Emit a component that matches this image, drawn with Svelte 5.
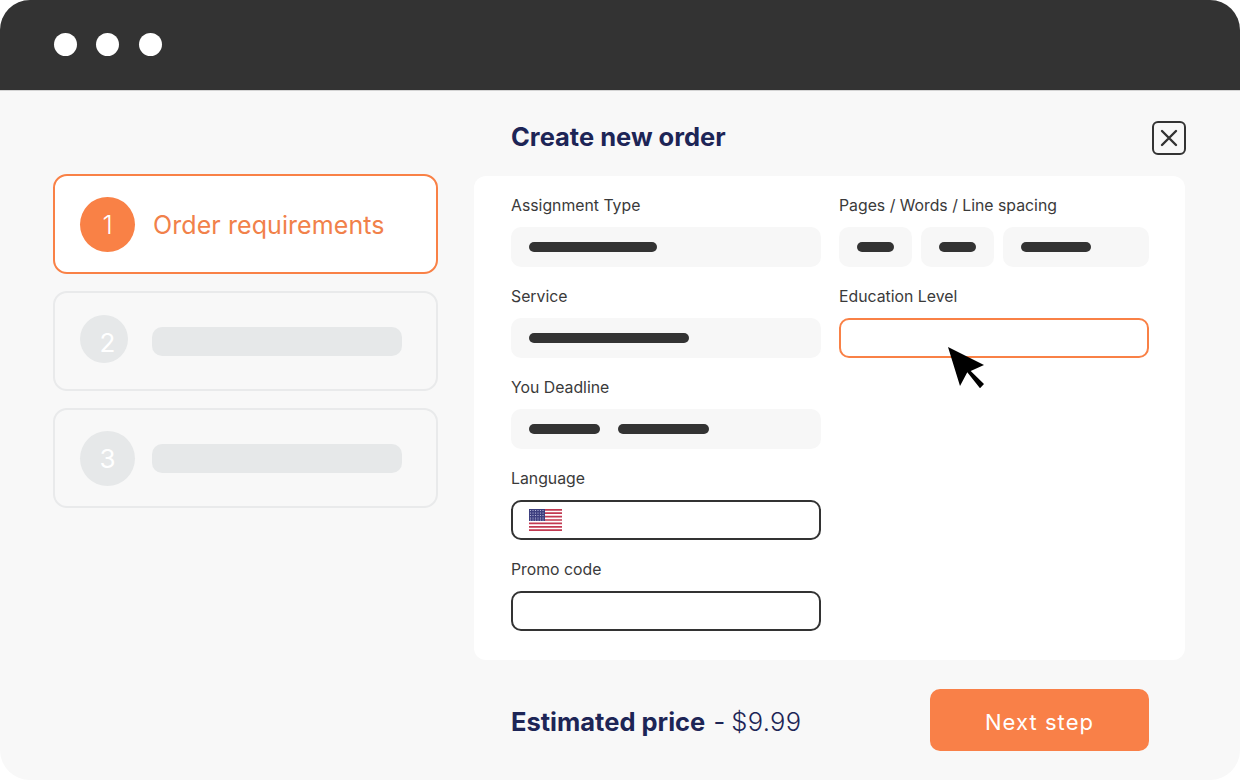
<script>
  const steps = [2, 3];
</script>

<div class="window">
  <header class="bar">
    <span class="dot"></span><span class="dot"></span><span class="dot"></span>
  </header>
  <div class="content">
    <aside class="side">
      <div class="step active">
        <span class="num">1</span>
        <span class="step-label">Order requirements</span>
      </div>
      {#each steps as s}
        <div class="step">
          <span class="num muted">{s}</span>
          <span class="skeleton"></span>
        </div>
      {/each}
    </aside>
    <main class="main">
      <div class="head">
        <h1>Create new order</h1>
        <button class="close" aria-label="Close">
          <svg width="20" height="20" viewBox="0 0 20 20"><path d="M3 3 17 17M17 3 3 17" stroke="#333" stroke-width="2.400" fill="none" stroke-linecap="round"/></svg>
        </button>
      </div>
      <section class="panel">
        <div class="col">
          <div class="group">
            <span class="label">Assignment Type</span>
            <div class="field filled"><i class="pill" style="width:128.5px"></i></div>
          </div>
          <div class="group">
            <span class="label">Service</span>
            <div class="field filled"><i class="pill" style="width:160px"></i></div>
          </div>
          <div class="group">
            <span class="label">You Deadline</span>
            <div class="field filled gap"><i class="pill" style="width:71.5px"></i><i class="pill" style="width:91px"></i></div>
          </div>
          <div class="group">
            <span class="label">Language</span>
            <div class="field outlined">
              <svg class="flag" width="33" height="22" viewBox="0 0 33 22">
                <rect width="33" height="22" fill="#fff"/>
                <path d="M0 .85h33M0 4.2h33M0 7.6h33M0 11h33M0 14.4h33M0 17.8h33M0 21.15h33" stroke="#c23a52" stroke-width="1.7"/>
                <rect width="16" height="12" fill="#3d3f7f"/>
                <g fill="#c9cbe6">
                  {#each [1.5, 4, 6.5, 9, 11] as y}
                    {#each [1.5, 4, 6.5, 9, 11.5, 14] as x}
                      <circle cx={x} cy={y} r=".6"/>
                    {/each}
                  {/each}
                </g>
              </svg>
            </div>
          </div>
          <div class="group">
            <span class="label">Promo code</span>
            <div class="field outlined"></div>
          </div>
        </div>
        <div class="col">
          <div class="group">
            <span class="label">Pages / Words / Line spacing</span>
            <div class="trio">
              <div class="field filled short"><i class="pill" style="width:37px"></i></div>
              <div class="field filled short"><i class="pill" style="width:37px"></i></div>
              <div class="field filled wide"><i class="pill" style="width:70px"></i></div>
            </div>
          </div>
          <div class="group">
            <span class="label">Education Level</span>
            <div class="field focus"></div>
          </div>
        </div>
        <svg class="cursor" width="39" height="44" viewBox="0 0 39 44">
          <path d="M1 1 37 19 23.700 25 37 38 33 42.300 20.300 26.300 13 40Z" fill="#000"/>
        </svg>
      </section>
      <footer class="foot">
        <div class="price"><strong>Estimated price</strong> <span class="dash">-</span> <span class="amount">$9.99</span></div>
        <button class="next">Next step</button>
      </footer>
    </main>
  </div>
</div>

<style>
  :global(body) {
    margin: 0;
    background: #fff;
  }
  .window {
    width: 1240px;
    height: 780px;
    border-radius: 30px;
    overflow: hidden;
    background: #f8f8f8;
    font-family: Inter, "Liberation Sans", sans-serif;
    display: flex;
    flex-direction: column;
  }
  .bar {
    flex: none;
    background: #333;
    border-bottom: 1px solid #d4d4d4;
    display: flex;
    align-items: center;
    gap: 19.250px;
    padding-left: 54px;
    padding-bottom: 2px;
    box-sizing: border-box;
    height: 91px;
  }
  .dot {
    width: 23px;
    height: 23px;
    border-radius: 50%;
    background: #fff;
  }
  .content {
    flex: 1;
    display: flex;
    padding-left: 53px;
  }
  .side {
    width: 385px;
    margin-top: 83px;
    display: flex;
    flex-direction: column;
    gap: 17px;
  }
  .step {
    box-sizing: border-box;
    height: 100px;
    border: 2px solid #e9eaeb;
    border-radius: 14px;
    display: flex;
    align-items: center;
    padding-left: 25px;
    gap: 24px;
  }
  .step.active {
    border: 2.500px solid #f98146;
    background: #fff;
    gap: 18px;
  }
  .num {
    width: 55px;
    height: 55px;
    border-radius: 50%;
    background: #f98146;
    color: #fff;
    display: flex;
    align-items: center;
    justify-content: center;
    font-size: 26px;
    font-weight: 300;
    flex: none;
    box-sizing: border-box;
  }
  .num.muted {
    width: 48px;
    height: 48px;
    margin-bottom: 5px;
    padding: 7px 0 0 7px;
    background: #e6e8e9;
    color: #fff;
    font-weight: 400;
  }
  .step:last-child .num.muted {
    width: 55px;
    height: 55px;
    margin: 0 -7px 0 0;
    padding: 0;
  }
  .step-label {
    font-size: 25px;
    color: #f1814a;
    letter-spacing: .08px;
    font-weight: 400;
    white-space: nowrap;
    padding-top: 2px;
  }
  .skeleton {
    width: 250px;
    height: 29px;
    border-radius: 10px;
    background: #e6e8e9;
  }
  .main {
    margin-left: 36px;
    width: 711px;
    display: flex;
    flex-direction: column;
  }
  .head {
    height: 85px;
    display: flex;
    align-items: center;
    justify-content: space-between;
    padding-left: 37px;
    padding-top: 5px;
    box-sizing: border-box;
  }
  h1 {
    margin: 0;
    font-size: 25.500px;
    font-weight: 700;
    color: #1d2556;
  }
  .close {
    width: 34px;
    height: 34px;
    box-sizing: border-box;
    border: 2px solid #333;
    border-radius: 6px;
    background: transparent;
    padding: 0;
    margin-right: -1px;
    margin-top: 3px;
    display: flex;
    align-items: center;
    justify-content: center;
  }
  .panel {
    position: relative;
    height: 484px;
    box-sizing: border-box;
    background: #fff;
    border-radius: 12px;
    padding: 18px 36px 0 37px;
    display: flex;
    gap: 18px;
  }
  .col {
    width: 310px;
    display: flex;
    flex-direction: column;
    gap: 11px;
  }
  .group {
    display: flex;
    flex-direction: column;
    height: 80px;
  }
  .label {
    box-sizing: border-box;
    padding-top: 1px;
    font-size: 15.800px;
    line-height: 22px;
    color: #3a3a3a;
    height: 33px;
  }
  .field {
    box-sizing: border-box;
    height: 40px;
    border-radius: 10px;
    display: flex;
    align-items: center;
    padding-left: 17.500px;
  }
  .filled {
    background: #f7f7f7;
  }
  .gap {
    gap: 17.500px;
  }
  .outlined {
    border: 2px solid #333;
    padding-left: 16px;
  }
  .focus {
    border: 2px solid #f98146;
  }
  .pill {
    display: block;
    height: 10px;
    border-radius: 5px;
    background: #333;
  }
  .trio {
    display: flex;
    gap: 9px;
  }
  .short {
    width: 73px;
  }
  .wide {
    width: 146px;
  }
  .cursor {
    position: absolute;
    left: 473px;
    top: 170px;
  }
  .foot {
    flex: 1;
    display: flex;
    align-items: center;
    justify-content: space-between;
    padding: 0 36px 0 37px;
  }
  .price {
    font-size: 25.500px;
    color: #1d2556;
    white-space: nowrap;
    padding-top: 2px;
  }
  .price strong {
    font-weight: 700;
  }
  .dash {
    margin: 0 -1px 0 1px;
  }
  .amount {
    font-weight: 300;
    letter-spacing: .3px;
  }
  .next {
    width: 219px;
    height: 62px;
    border: 0;
    border-radius: 10px;
    background: #f98048;
    color: #fff;
    font-family: inherit;
    font-size: 22px;
    font-weight: 400;
    letter-spacing: 1.050px;
    padding-top: 4px;
  }
</style>
